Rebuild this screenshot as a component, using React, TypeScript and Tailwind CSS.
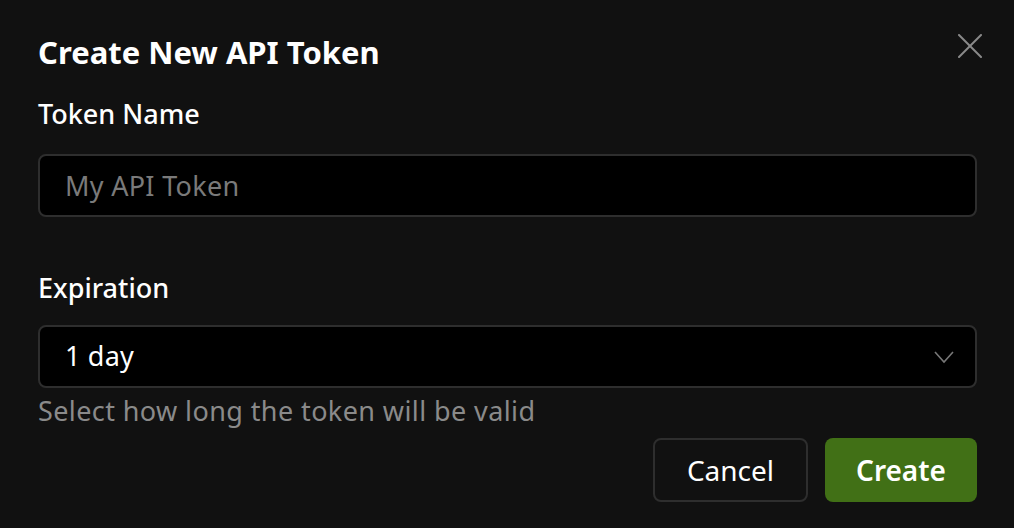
export default function App() {
  return (
    <div className="h-[528px] w-full bg-[#111111] font-['Noto_Sans',sans-serif] text-white">
      <div className="relative pl-[38px] pr-[37px] pt-[30px]">
        <button className="absolute right-[32px] top-[34px] text-[#8a8a8a]">
          <svg width="24" height="24" viewBox="0 0 24 24" fill="none" stroke="currentColor" strokeWidth="2" strokeLinecap="round">
            <line x1="1" y1="1" x2="23" y2="23" />
            <line x1="23" y1="1" x2="1" y2="23" />
          </svg>
        </button>

        <h2 className="text-[31px] font-bold leading-[44px]">Create New API Token</h2>

        {/* Token name */}
        <div className="mt-[22px]">
          <label className="block text-[27px] font-medium leading-[36px]">Token Name</label>
          <input
            className="mt-[22px] h-[63px] w-full rounded-[8px] border-2 border-[#2e2e2e] bg-black px-[25px] text-[27px] tracking-[0.3px] text-white placeholder:text-[#7a7a7a] outline-none"
            placeholder="My API Token"
          />
        </div>

        {/* Expiration */}
        <div className="mt-[53px]">
          <label className="block text-[27px] font-medium leading-[36px]">Expiration</label>
          <div className="mt-[19px] flex h-[63px] w-full items-center justify-between rounded-[8px] border-2 border-[#2e2e2e] bg-black pl-[25px] pr-[21px]">
            <span className="text-[27px] tracking-[0.2px]">1 day</span>
            <svg width="20" height="14" viewBox="0 0 20 14" fill="none" stroke="#777777" strokeWidth="1.6">
              <polyline points="1,2 10,12 19,2" />
            </svg>
          </div>
          <p className="mt-[4px] text-[27px] leading-[38px] tracking-[0.4px] text-[#8a8a8a]">
            Select how long the token will be valid
          </p>
        </div>

        <div className="mt-[8px] flex justify-end gap-[17px]">
          <button className="h-[64px] w-[155px] rounded-[8px] border-2 border-[#2e2e2e] text-[28px] text-white">
            Cancel
          </button>
          <button className="h-[64px] w-[152px] rounded-[8px] bg-[#417016] text-[28px] font-semibold text-white">
            Create
          </button>
        </div>
      </div>
    </div>
  );
}
